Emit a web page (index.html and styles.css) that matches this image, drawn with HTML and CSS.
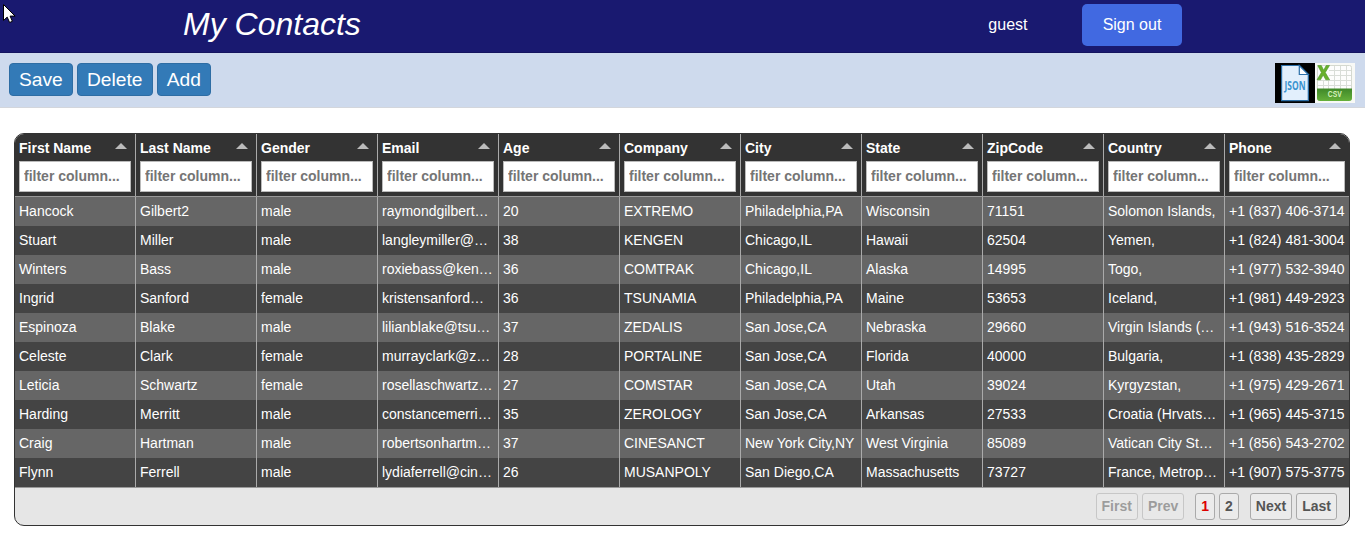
FILE: index.html
```
<!DOCTYPE html>
<html lang="en">
<head>
<meta charset="utf-8">
<title>My Contacts</title>
<link rel="stylesheet" href="styles.css">
</head>
<body>
<header class="topbar">
  <h1 class="title">My Contacts</h1>
  <span class="user">guest</span>
  <button class="signout">Sign out</button>
</header>
<svg class="cursor" width="13" height="20" viewBox="0 0 13 20"><path d="M.5.5v16l3.700-3.400 2.400 5.400 2.800-1.200-2.300-5.200h5z" fill="#fff" stroke="#000"/></svg>
<nav class="toolbar">
  <button class="btn">Save</button>
  <button class="btn btn-wide">Delete</button>
  <button class="btn">Add</button>
  <div class="exports">
    <svg width="40" height="40" viewBox="0 0 40 40">
      <path fill="#000" d="M0 0h40v40H0z"/>
      <path d="M6.600 2.500h17.700l9 9v26.200H6.600z" fill="#e2effc" stroke="#2c6fa8" stroke-width="1.200"/>
      <path d="M24.300 2.500v9h9z" fill="#fff" stroke="#2c6fa8" stroke-width="1.200"/>
      <text x="9.500" y="26.500" class="json-label" textLength="21" lengthAdjust="spacingAndGlyphs">JSON</text>
    </svg>
    <svg width="40" height="40" viewBox="0 0 40 40">
      <defs><linearGradient id="g" x2="0" y2="1"><stop stop-color="#3f8829"/><stop offset="1" stop-color="#65b03a"/></linearGradient></defs>
      <path fill="#f8f9f6" d="M0 0h40v40H0z"/>
      <rect x="2.500" y="2.500" width="34" height="35" rx="2" fill="#fdfdfd" stroke="#d5d9d0"/>
      <path d="M14 7.500h22M14 12.500h22M3 17.500h33M3 22.500h33M8.500 17v9M13.500 17v9M19.500 3v23M25.500 3v23M31.500 3v23" stroke="#d9ddd8" fill="none"/>
      <path d="M2.700 2.500h3.600l2.400 4.700 2.500-4.700h3.300L10.300 9.500l4.300 7.300h-3.800L8.200 12l-2.700 4.800H2L6.400 9.500z" fill="#68b02d" stroke="#4c9728" stroke-width=".6"/>
      <path d="M2 25.500h35v9.500q0 3-3 3H5q-3 0-3-3z" fill="url(#g)"/>
      <text x="12.800" y="34.400" class="csv-label" textLength="14" lengthAdjust="spacingAndGlyphs">CSV</text>
    </svg>
  </div>
</nav>
<main class="grid" id="grid">
  <div class="columns" id="columns"></div>
  <div class="rows" id="rows"></div>
  <footer class="pager">
    <button class="page off">First</button>
    <button class="page off">Prev</button>
    <span class="pages"><button class="page current">1</button><button class="page">2</button></span>
    <button class="page">Next</button>
    <button class="page">Last</button>
  </footer>
</main>
<script src="app.js"></script>
</body>
</html>
```
FILE: styles.css
```
* { box-sizing: border-box; }
body { margin: 0; background: #fff; font-family: "Liberation Sans", Arial, sans-serif; }
button, input { font-family: inherit; margin: 0; }
.topbar { height: 53px; background: #191970; border-bottom: 1px solid #14145f; display: flex; align-items: flex-start; padding: 4px 183px; color: #fff; }
.title { margin: 2px auto 0 0; font-size: 32px; line-height: 37px; font-weight: 400; font-style: italic; }
.user { font-size: 16px; line-height: 41px; margin-right: 54.5px; }
.signout { width: 100px; height: 42px; border: 0; border-radius: 5px; background: #4169e1; color: #fff; font-size: 16px; padding: 0; }
.cursor { position: absolute; left: 3px; top: 4px; }
.toolbar { height: 55px; background: #cedaed; border-bottom: 1px solid #d3d6dc; padding: 10px 10px 0 9px; display: flex; align-items: flex-start; gap: 4px; }
.btn { height: 33px; padding: 0 9px; border: 1px solid #2e6da4; border-radius: 4px; background: #337ab7; color: #fff; font-size: 19.2px; line-height: 31px; }
.btn-wide { width: 76px; }
.exports { margin-left: auto; display: flex; }
.json-label { font: bold 12px "Open Sans", sans-serif; fill: #3a93cf; }
.csv-label { font: bold 8.5px "Liberation Sans", sans-serif; fill: #d8f2bd; }
.grid { margin: 25px 15px 0 14px; height: 393px; border: 1px solid #333; border-radius: 10px; overflow: hidden; background: #e6e6e6; font-size: 14px; }
.columns, .row { display: grid; grid-template-columns: repeat(10, 121px) 1fr; }
.columns { height: 63px; background: #333; border-bottom: 1px solid #999; color: #fff; font-weight: 700; }
.column { border-right: 1px solid #aaa; padding: 5px 4px 0; min-width: 0; }
.column:last-child, .cell:last-child { border-right: 0; }
.heading { display: flex; justify-content: space-between; line-height: 18px; height: 22px; }
.sort { width: 0; height: 0; border: 6px solid transparent; border-top: 0; border-bottom-color: #bbb; margin: 4px 4px 0 0; }
.filter { display: block; width: 100%; height: 31px; padding: 0 4px 2px; border: 1px solid #bbb; border-radius: 0; background: #fff; font-size: 14px; font-weight: 700; }
.filter::placeholder { color: #757575; opacity: 1; }
.row { height: 29px; background: #666; color: #fff; }
.row:nth-child(even) { background: #444; }
.cell { border-right: 1px solid #aaa; padding-left: 4px; line-height: 29px; white-space: nowrap; overflow: hidden; min-width: 0; }
.pager { height: 38px; border-top: 1px solid #999; padding: 5px 12px 0 0; display: flex; justify-content: flex-end; gap: 4px; }
.page { height: 27px; padding: 0 5px; border: 1px solid #aaa; border-radius: 3px; background: #ebebeb; color: #555; font-size: 14px; font-weight: 700; line-height: 25px; }
.pages { display: flex; gap: 4px; margin: 0 7px; }
.off { opacity: .5; }
.current { color: #d00; }
```
FILE: app.js
```
const columns = ["First Name", "Last Name", "Gender", "Email", "Age", "Company", "City", "State", "ZipCode", "Country", "Phone"];
const contacts = `Hancock|Gilbert2|male|raymondgilbert…|20|EXTREMO|Philadelphia,PA|Wisconsin|71151|Solomon Islands,|+1 (837) 406-3714
Stuart|Miller|male|langleymiller@…|38|KENGEN|Chicago,IL|Hawaii|62504|Yemen,|+1 (824) 481-3004
Winters|Bass|male|roxiebass@ken…|36|COMTRAK|Chicago,IL|Alaska|14995|Togo,|+1 (977) 532-3940
Ingrid|Sanford|female|kristensanford…|36|TSUNAMIA|Philadelphia,PA|Maine|53653|Iceland,|+1 (981) 449-2923
Espinoza|Blake|male|lilianblake@tsu…|37|ZEDALIS|San Jose,CA|Nebraska|29660|Virgin Islands (…|+1 (943) 516-3524
Celeste|Clark|female|murrayclark@z…|28|PORTALINE|San Jose,CA|Florida|40000|Bulgaria,|+1 (838) 435-2829
Leticia|Schwartz|female|rosellaschwartz…|27|COMSTAR|San Jose,CA|Utah|39024|Kyrgyzstan,|+1 (975) 429-2671
Harding|Merritt|male|constancemerri…|35|ZEROLOGY|San Jose,CA|Arkansas|27533|Croatia (Hrvats…|+1 (965) 445-3715
Craig|Hartman|male|robertsonhartm…|37|CINESANCT|New York City,NY|West Virginia|85089|Vatican City St…|+1 (856) 543-2702
Flynn|Ferrell|male|lydiaferrell@cin…|26|MUSANPOLY|San Diego,CA|Massachusetts|73727|France, Metrop…|+1 (907) 575-3775`;
document.getElementById("columns").innerHTML = columns.map(name =>
  `<div class="column"><div class="heading"><span>${name}</span><i class="sort"></i></div><input class="filter" placeholder="filter column..."></div>`).join("");
document.getElementById("rows").innerHTML = contacts.split("\n").map(line =>
  `<div class="row">${line.split("|").map(value => `<div class="cell">${value}</div>`).join("")}</div>`).join("");
```
